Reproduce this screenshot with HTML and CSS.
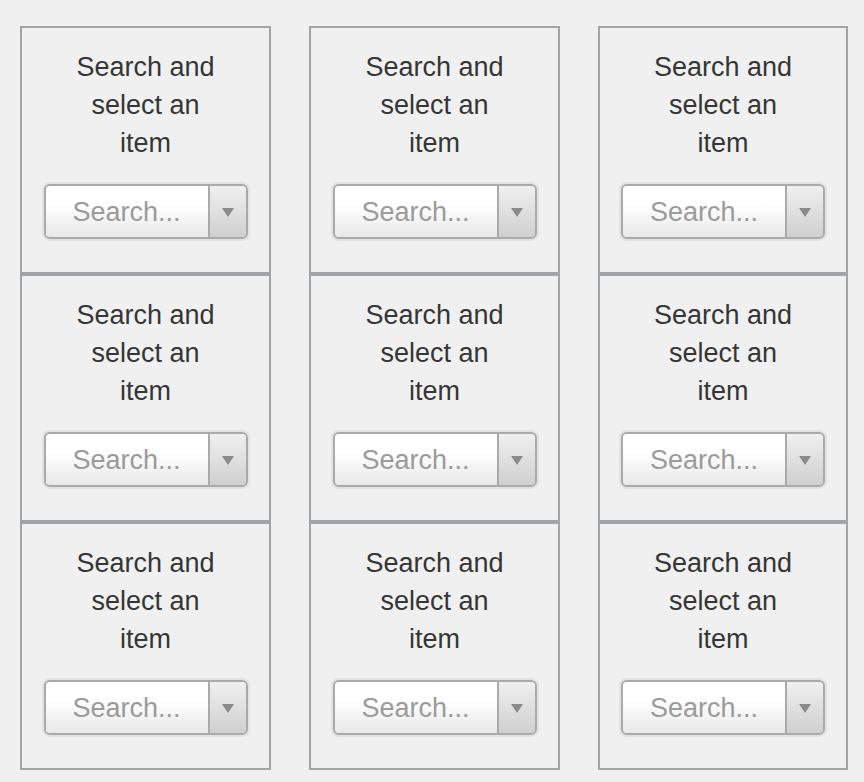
FILE: index.html
```html
<!DOCTYPE html>
<html lang="en">
<head>
<meta charset="utf-8">
<title>Search and select</title>
<link rel="stylesheet" href="styles.css">
</head>
<body>
<div class="grid">
  <div class="card"><p class="label">Search and select an item</p><div class="combo"><div class="combo-box"><span class="field">Search...</span><span class="toggle"><svg width="12" height="9" viewBox="0 0 12 9"><path d="M0 0H12L6 9Z" fill="#8a8a8a"/></svg></span></div></div></div>
  <div class="card"><p class="label">Search and select an item</p><div class="combo"><div class="combo-box"><span class="field">Search...</span><span class="toggle"><svg width="12" height="9" viewBox="0 0 12 9"><path d="M0 0H12L6 9Z" fill="#8a8a8a"/></svg></span></div></div></div>
  <div class="card"><p class="label">Search and select an item</p><div class="combo"><div class="combo-box"><span class="field">Search...</span><span class="toggle"><svg width="12" height="9" viewBox="0 0 12 9"><path d="M0 0H12L6 9Z" fill="#8a8a8a"/></svg></span></div></div></div>
  <div class="card"><p class="label">Search and select an item</p><div class="combo"><div class="combo-box"><span class="field">Search...</span><span class="toggle"><svg width="12" height="9" viewBox="0 0 12 9"><path d="M0 0H12L6 9Z" fill="#8a8a8a"/></svg></span></div></div></div>
  <div class="card"><p class="label">Search and select an item</p><div class="combo"><div class="combo-box"><span class="field">Search...</span><span class="toggle"><svg width="12" height="9" viewBox="0 0 12 9"><path d="M0 0H12L6 9Z" fill="#8a8a8a"/></svg></span></div></div></div>
  <div class="card"><p class="label">Search and select an item</p><div class="combo"><div class="combo-box"><span class="field">Search...</span><span class="toggle"><svg width="12" height="9" viewBox="0 0 12 9"><path d="M0 0H12L6 9Z" fill="#8a8a8a"/></svg></span></div></div></div>
  <div class="card"><p class="label">Search and select an item</p><div class="combo"><div class="combo-box"><span class="field">Search...</span><span class="toggle"><svg width="12" height="9" viewBox="0 0 12 9"><path d="M0 0H12L6 9Z" fill="#8a8a8a"/></svg></span></div></div></div>
  <div class="card"><p class="label">Search and select an item</p><div class="combo"><div class="combo-box"><span class="field">Search...</span><span class="toggle"><svg width="12" height="9" viewBox="0 0 12 9"><path d="M0 0H12L6 9Z" fill="#8a8a8a"/></svg></span></div></div></div>
  <div class="card"><p class="label">Search and select an item</p><div class="combo"><div class="combo-box"><span class="field">Search...</span><span class="toggle"><svg width="12" height="9" viewBox="0 0 12 9"><path d="M0 0H12L6 9Z" fill="#8a8a8a"/></svg></span></div></div></div>
</div>
</body>
</html>
```

FILE: styles.css
```css
html, body {
  margin: 0;
  padding: 0;
  background: #f0f0f0;
}

body {
  font-family: "Liberation Sans", Arial, sans-serif;
  color: #363636;
}

.grid {
  display: grid;
  grid-template-columns: 251px 251px 250px;
  column-gap: 38px;
  padding: 26px 0 0 20px;
}

.card {
  box-sizing: border-box;
  height: 248px;
  border: 2px solid #a2a5a8;
  padding: 20px 0 0;
  display: flex;
  flex-direction: column;
  align-items: center;
}

.label {
  margin: 0;
  width: 150px;
  font-size: 27px;
  line-height: 38px;
  text-align: center;
}

.combo {
  margin-top: 20px;
  padding: 2px;
  border-radius: 8px;
  background: #e2e2e2;
}

.combo-box {
  box-sizing: border-box;
  width: 204px;
  height: 55px;
  border: 2px solid #aaaaaa;
  border-radius: 6px;
  display: flex;
  overflow: hidden;
}

.field {
  flex: 0 0 162px;
  display: flex;
  align-items: center;
  justify-content: center;
  padding-top: 2px;
  font-size: 27px;
  color: #9b9b9b;
  background: linear-gradient(#ffffff 35%, #e8e8e8);
  border-right: 2px solid #aaaaaa;
}

.toggle {
  flex: 1;
  display: flex;
  align-items: center;
  justify-content: center;
  padding-top: 1px;
  background: linear-gradient(#f0f0f0, #cfcfcf);
}
```
